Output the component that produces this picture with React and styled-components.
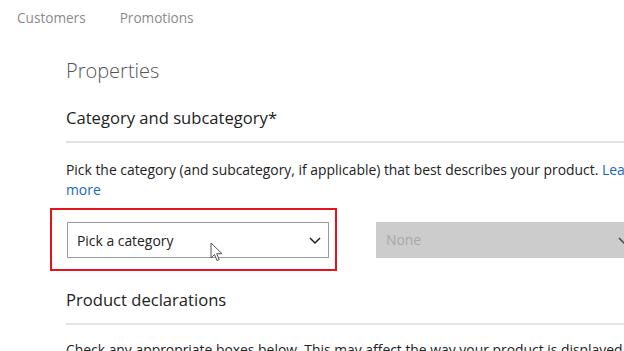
import React from 'react';
import styled, { createGlobalStyle } from 'styled-components';

const GlobalStyle = createGlobalStyle`
    html, body {
        margin: 0;
        padding: 0;
        background: #ffffff;
        overflow: hidden;
    }
    body {
        font-family: "Open Sans", "Noto Sans", sans-serif;
        color: #222;
    }
`;

const Page = styled.div`
    width: 624px;
    height: 351px;
    overflow: hidden;
`;

const TopNav = styled.nav`
    display: flex;
    gap: 34px;
    padding: 8px 0 0 17px;
    height: 22px;
`;

const NavLink = styled.span`
    font-size: 13.6px;
    color: #8a8a8a;
`;

const Content = styled.main`
    width: 590px;
    padding: 28px 0 0 66px;
`;

const PageTitle = styled.h1`
    margin: 0;
    font-size: 20px;
    font-weight: 300;
    color: #555;
    line-height: 26px;
`;

const SectionTitle = styled.h2`
    margin: ${p => p.$top}px 0 0;
    font-size: 16.6px;
    font-weight: 400;
    color: #222;
    line-height: 22px;
    padding-bottom: 12px;
    border-bottom: 2px solid #e3e3e3;
`;

const Body = styled.p`
    margin: ${p => p.$top}px 0 0;
    font-size: 13.9px;
    line-height: 20px;
    color: #222;
`;

const Link = styled.a`
    color: #1668c1;
    text-decoration: none;
`;

const SelectRow = styled.div`
    display: flex;
    gap: 39px;
    margin: 8px 0 0 -16px;
    align-items: center;
`;

const Highlight = styled.div`
    border: 2px solid #e3141b;
    padding: 12px 6px 11px 15px;
    position: relative;
`;

const Select = styled.div`
    width: ${p => p.$w}px;
    height: 36px;
    box-sizing: border-box;
    display: flex;
    align-items: center;
    justify-content: space-between;
    padding: 0 6px 0 9px;
    font-size: 13.9px;
    border: 1px solid ${p => (p.$disabled ? '#cccccc' : '#9a9a9a')};
    background: ${p => (p.$disabled ? '#cccccc' : '#ffffff')};
    color: ${p => (p.$disabled ? '#a8a8a8' : '#222')};
`;

const Chevron = ({ color }) => (
    <svg width="14" height="14" viewBox="0 0 14 14" fill="none">
        <path d="M2 5l5 5 5-5" stroke={color} strokeWidth="1.5" />
    </svg>
);

const Cursor = styled.svg`
    position: absolute;
    left: 158px;
    top: 32px;
`;

const App = () => (
    <>
        <GlobalStyle />
        <Page>
            <TopNav>
                <NavLink>Customers</NavLink>
                <NavLink>Promotions</NavLink>
            </TopNav>
            <Content>
                <PageTitle>Properties</PageTitle>
                <SectionTitle $top={23}>Category and subcategory*</SectionTitle>
                <Body $top={17}>
                    Pick the category (and subcategory, if applicable) that best describes your product. <Link>Learn more</Link>
                </Body>
                <SelectRow>
                    <Highlight>
                        <Select $w={262}>
                            Pick a category
                            <Chevron color="#222" />
                        </Select>
                        {/* mouse pointer over the select */}
                        <Cursor width="14" height="20" viewBox="0 0 14 20">
                            <path d="M1 1v15l3.5-3.5 2.5 6 2.2-1-2.5-5.8H12z" fill="#fff" stroke="#555" strokeWidth="1" strokeLinejoin="round" />
                        </Cursor>
                    </Highlight>
                    <Select $w={262} $disabled>
                        None
                        <Chevron color="#444" />
                    </Select>
                </SelectRow>
                <SectionTitle $top={18}>Product declarations</SectionTitle>
                <Body $top={15}>
                    Check any appropriate boxes below. This may affect the way your product is displayed
                </Body>
            </Content>
        </Page>
    </>
);

export default App;
